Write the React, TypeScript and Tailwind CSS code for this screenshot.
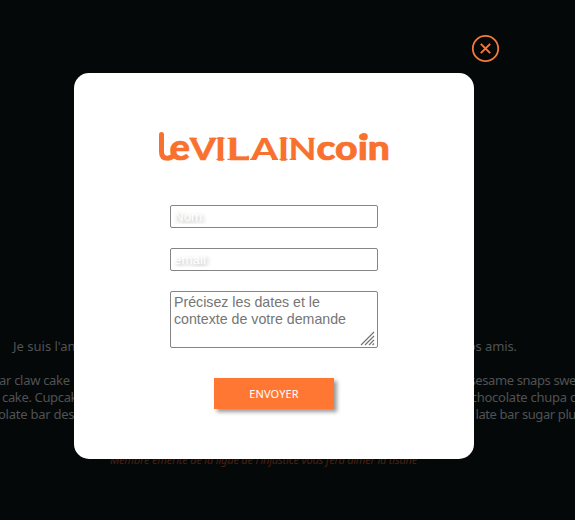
import React from "react";

function Line({ left, right, leftClass, rightClass }: { left: string; right: string; leftClass: string; rightClass: string }) {
  return (
    <p className="flex h-[17px] justify-between whitespace-pre">
      <span className={leftClass}>{left}</span>
      <span className={rightClass}>{right}</span>
    </p>
  );
}

const flaredLetters = [
  { char: "V", x: 36, width: 26, weight: 0.5 },
  { char: "I", x: 62, width: 9, weight: 1.4 },
  { char: "L", x: 72.5, width: 23, weight: 0.3 },
  { char: "A", x: 97, width: 27, weight: 0.2 },
  { char: "I", x: 125, width: 9, weight: 1.4 },
  { char: "N", x: 134.5, width: 28, weight: 0.2 },
];

function Logo() {
  return (
    <svg className="mt-[54px] block h-[40px] w-[240px]" viewBox="0 0 240 40" fill="#f9712f" role="img" aria-label="leVILAINcoin">
      <path d="M7.5 7.5V25Q7.5 31.2 13.5 31.2Q17 31.2 20 28" fill="none" stroke="#f9712f" strokeWidth="5" strokeLinecap="round" />
      <text x="15.5" y="33.2" fontFamily="Lato, sans-serif" fontSize="36" fontWeight="900" textLength="20.5" lengthAdjust="spacingAndGlyphs" stroke="#f9712f" strokeWidth="0.6">e</text>
      <g fontFamily="Lato, sans-serif" fontSize="31" fontWeight="700" stroke="#f9712f">
        {flaredLetters.map((l) => (
          <text key={l.x} x={l.x} y="33" textLength={l.width} lengthAdjust="spacingAndGlyphs" strokeWidth={l.weight}>{l.char}</text>
        ))}
      </g>
      <path
        d="M35.5 11.3H43M55 11.3H61.5M62.5 11.3H70.5M62.5 32.4H70.5M73.5 11.3H81.5M73.5 32.4H78M94 28.5V33M96 32.4H102M118 32.4H124M125.5 11.3H133.5M125.5 32.4H133.5M135.5 11.3H140M135.5 32.4H142M154 11.3H160.5"
        stroke="#f9712f"
        strokeWidth="1.2"
      />
      <text x="162.5" y="33" fontFamily="Lato, sans-serif" fontSize="35" fontWeight="900" textLength="73.5" lengthAdjust="spacingAndGlyphs" stroke="#f9712f" strokeWidth="0.7">coin</text>
      <circle cx="210" cy="9.8" r="3.8" />
    </svg>
  );
}

const field =
  "block w-[208px] rounded-[2px] border border-[#858585] bg-white px-[3px] font-['Liberation_Sans',Arial,sans-serif] outline-none";

export default function App() {
  return (
    <main className="relative h-[520px] w-[575px] overflow-hidden bg-[#040809] font-['Noto_Sans',sans-serif]">
      <div className="pt-[338px] text-[13px] leading-[17px] text-[#505253]">
        <Line left="Je suis l'an" right="os amis." leftClass="ml-[13px]" rightClass="mr-[58px] tracking-[-0.1px]" />
        <div className="h-[17px]" />
        <Line left="ar claw cake" right="sesame snaps swe" leftClass="-ml-px tracking-[-0.3px]" rightClass="-mr-px tracking-[-0.4px]" />
        <Line left="cake. Cupcak" right="chocolate chupa c" leftClass="ml-[2px] tracking-[-0.35px]" rightClass="-mr-px tracking-[-0.25px]" />
        <Line left="olate bar des" right="late bar sugar plu" leftClass="-ml-[2px] tracking-[-0.25px]" rightClass="-mr-px tracking-[-0.4px]" />
        <p className="ml-[110px] mt-[28px] whitespace-nowrap text-[11px] italic tracking-[-0.19px] text-[#4a210f]">
          Membre émérite de la ligue de l'injustice vous fera aimer la tisane
        </p>
      </div>

      <button aria-label="Fermer" className="absolute left-[471px] top-[34px] size-[29px]">
        <svg viewBox="0 0 29 29" fill="none" stroke="#f47a3c">
          <circle cx="14.5" cy="14.5" r="12.7" strokeWidth="1.8" />
          <path d="M9.8 9.8L19.2 19.2M19.2 9.8L9.8 19.2" strokeWidth="1.9" />
        </svg>
      </button>

      <section className="absolute left-[74px] top-[73px] flex h-[386px] w-[400px] flex-col items-center rounded-[15px] bg-white">
        <Logo />
        <form className="mt-[38px] flex flex-col items-center" onSubmit={(e) => e.preventDefault()}>
          <input
            placeholder="Nom"
            className={`${field} h-[23px] text-[13.33px] placeholder:text-white placeholder:[text-shadow:2px_2px_4px_rgba(0,0,0,0.3)]`}
          />
          <input
            placeholder="email"
            className={`${field} mt-[20px] h-[23px] text-[13.33px] placeholder:text-white placeholder:[text-shadow:2px_2px_4px_rgba(0,0,0,0.3)]`}
          />
          <div className="relative mt-[20px]">
            <textarea
              placeholder="Précisez les dates et le contexte de votre demande"
              className={`${field} h-[57px] resize-none overflow-hidden pt-[2px] text-[14.2px] leading-[17px] placeholder:text-[#757575]`}
            />
            <svg className="absolute bottom-[2px] right-[3px] size-[15px]" viewBox="0 0 15 15" stroke="#707070" strokeWidth="1.1">
              <path d="M1 14L14 1M5 14L14 5M9 14L14 9M12.5 14L14 12.5" />
            </svg>
          </div>
          <button className="mt-[30px] h-[31px] w-[120px] bg-[#ff7733] pt-px text-[11px] tracking-[0.1px] text-white shadow-[3px_3px_4px_rgba(0,0,0,0.4)]">
            ENVOYER
          </button>
        </form>
      </section>
    </main>
  );
}
